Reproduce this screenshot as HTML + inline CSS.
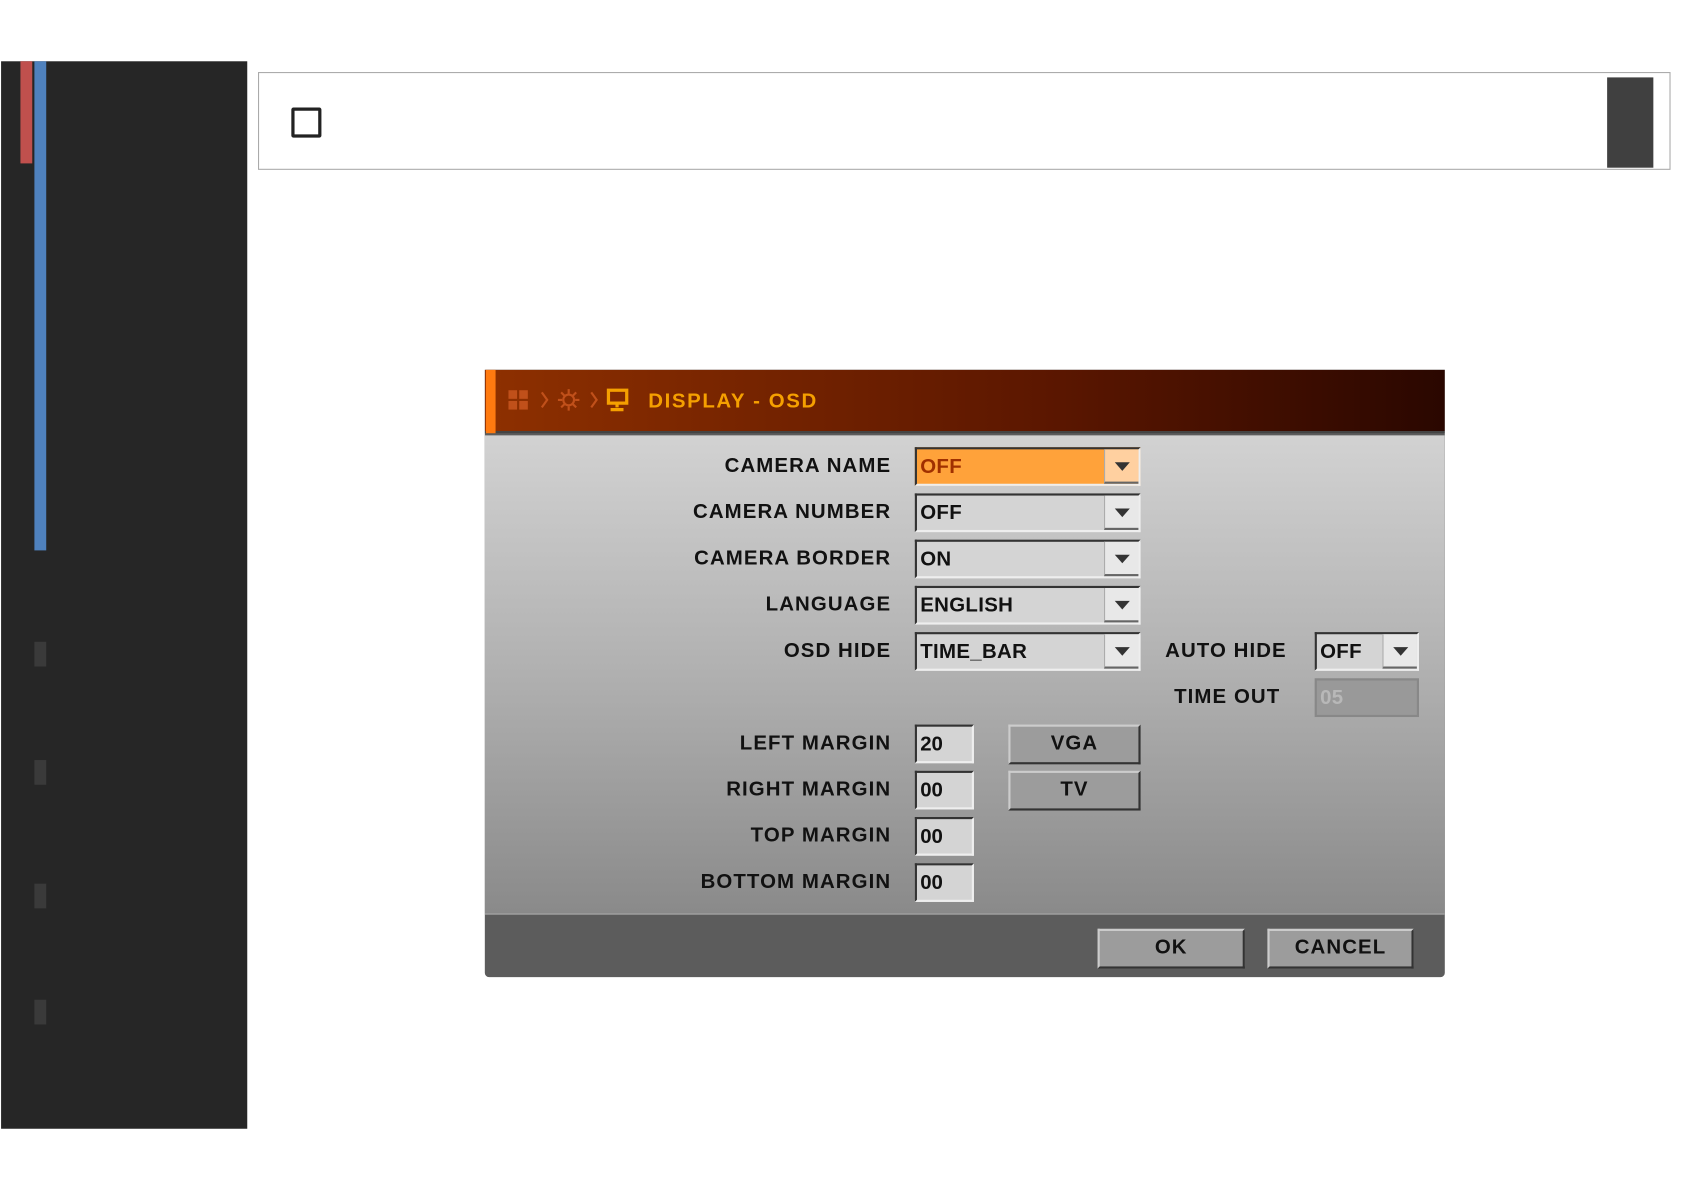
<!DOCTYPE html>
<html><head><meta charset="utf-8"><style>
*{margin:0;padding:0;box-sizing:border-box}
html,body{width:1684px;height:1190px;overflow:hidden;background:#fff}
#w{position:absolute;left:0;top:0;width:1568px;height:1108px;transform:scale(1.075);transform-origin:0 0;font-family:"Liberation Sans",sans-serif}
.a{position:absolute}
.lbl{position:absolute;right:739px;font-weight:bold;font-size:19px;letter-spacing:1px;color:#111;line-height:20px}
.dd{position:absolute;left:851px;width:210px;height:36px;background:#d4d4d4;border:2px solid #333;border-right-color:#eee;border-bottom-color:#eee;font-weight:bold;font-size:19px;padding:6px 0 0 3px;color:#111;letter-spacing:.3px}
.dd .ar{position:absolute;right:0;top:0;width:32px;height:32px;background:#e8e8e8;border-left:1px solid #aaa;border-bottom:2px solid #666}
.dd .ar:after{content:"";position:absolute;left:9px;top:12px;border-left:7px solid transparent;border-right:7px solid transparent;border-top:8px solid #333}
.in{position:absolute;left:851px;width:55px;height:36px;background:#d4d4d4;border:2px solid #333;border-right-color:#eee;border-bottom-color:#eee;font-weight:bold;font-size:19px;padding:6px 0 0 3px;color:#111}
.bt{position:absolute;background:#9c9c9c;border:2px solid #ccc;border-right-color:#333;border-bottom-color:#333;font-weight:bold;font-size:19px;text-align:center;line-height:32px;color:#111;letter-spacing:1px}
</style></head><body><div id="w">
<div class="a" style="left:1px;top:57px;width:229px;height:993px;background:#262626"></div>
<div class="a" style="left:19px;top:57px;width:11px;height:95px;background:#c0504d"></div>
<div class="a" style="left:32px;top:57px;width:11px;height:455px;background:#4f81bd"></div>
<div class="a" style="left:32px;top:597px;width:11px;height:23px;background:#3a3a3a"></div>
<div class="a" style="left:32px;top:707px;width:11px;height:23px;background:#3a3a3a"></div>
<div class="a" style="left:32px;top:822px;width:11px;height:23px;background:#3a3a3a"></div>
<div class="a" style="left:32px;top:930px;width:11px;height:23px;background:#3a3a3a"></div>
<div class="a" style="left:240px;top:67px;width:1314px;height:91px;border:1.5px solid #aaa;background:#fff"></div>
<div class="a" style="left:271px;top:100px;width:28px;height:28px;border:3px solid #222;border-radius:2px"></div>
<div class="a" style="left:1495px;top:72px;width:43px;height:84px;background:#404040"></div>

<div class="a" style="left:451px;top:344px;width:893px;height:565px;background:#5c5c5c;border-radius:0 0 4px 4px;overflow:hidden">
 <div class="a" style="left:0;top:0;width:893px;height:59px;background:linear-gradient(90deg,#8e3000,#5a1600 60%,#2a0700);border-bottom:2px solid #444"></div>
 <div class="a" style="left:1px;top:0;width:9px;height:59px;background:#ff7a10"></div>
 <svg class="a" style="left:20px;top:16px" width="140" height="26">
  <g fill="#c0501a"><rect x="2" y="3" width="8" height="8"/><rect x="12" y="3" width="8" height="8"/><rect x="2" y="13" width="8" height="8"/><rect x="12" y="13" width="8" height="8"/></g>
  <path d="M33 5l5 7-5 7M79 5l5 7-5 7" stroke="#c0501a" stroke-width="2" fill="none"/>
  <circle cx="58" cy="12" r="5" stroke="#c0501a" stroke-width="2" fill="none"/>
  <path d="M58 2v4M58 18v4M48 12h4M64 12h4M51 5l3 3M62 16l3 3M51 19l3-3M62 8l3-3" stroke="#c0501a" stroke-width="2"/>
  <rect x="95" y="3" width="17" height="12" stroke="#f5a000" stroke-width="3" fill="none"/>
  <path d="M103 15v4M97 21h12" stroke="#f5a000" stroke-width="3"/>
 </svg>
 <div class="a" style="left:152px;top:19px;color:#f5a000;font-weight:bold;font-size:19px;letter-spacing:1.5px">DISPLAY - OSD</div>
 <div class="a" style="left:0;top:61px;width:893px;height:446px;background:linear-gradient(180deg,#d2d2d2,#b0b0b0 50%,#8a8a8a);border-bottom:2px solid #999"></div>
</div>

<div class="lbl" style="top:424px">CAMERA NAME</div>
<div class="lbl" style="top:467px">CAMERA NUMBER</div>
<div class="lbl" style="top:510px">CAMERA BORDER</div>
<div class="lbl" style="top:553px">LANGUAGE</div>
<div class="lbl" style="top:596px">OSD HIDE</div>
<div class="lbl" style="top:682px">LEFT MARGIN</div>
<div class="lbl" style="top:725px">RIGHT MARGIN</div>
<div class="lbl" style="top:768px">TOP MARGIN</div>
<div class="lbl" style="top:811px">BOTTOM MARGIN</div>
<div class="lbl" style="top:596px;right:371px">AUTO HIDE</div>
<div class="lbl" style="top:639px;right:377px">TIME OUT</div>

<div class="dd" style="top:416px;background:#ffa23a;color:#a03000">OFF<div class="ar" style="background:#ffd0a0"></div></div>
<div class="dd" style="top:459px">OFF<div class="ar"></div></div>
<div class="dd" style="top:502px">ON<div class="ar"></div></div>
<div class="dd" style="top:545px">ENGLISH<div class="ar"></div></div>
<div class="dd" style="top:588px">TIME_BAR<div class="ar"></div></div>
<div class="dd" style="top:588px;left:1223px;width:97px">OFF<div class="ar"></div></div>
<div class="dd" style="top:631px;left:1223px;width:97px;background:#999;border-color:#888;color:#b8b8b8">05</div>

<div class="in" style="top:674px">20</div>
<div class="in" style="top:717px">00</div>
<div class="in" style="top:760px">00</div>
<div class="in" style="top:803px">00</div>
<div class="bt" style="left:938px;top:674px;width:123px;height:37px">VGA</div>
<div class="bt" style="left:938px;top:717px;width:123px;height:37px">TV</div>
<div class="bt" style="left:1021px;top:864px;width:137px;height:37px">OK</div>
<div class="bt" style="left:1179px;top:864px;width:136px;height:37px">CANCEL</div>
</div></body></html>
